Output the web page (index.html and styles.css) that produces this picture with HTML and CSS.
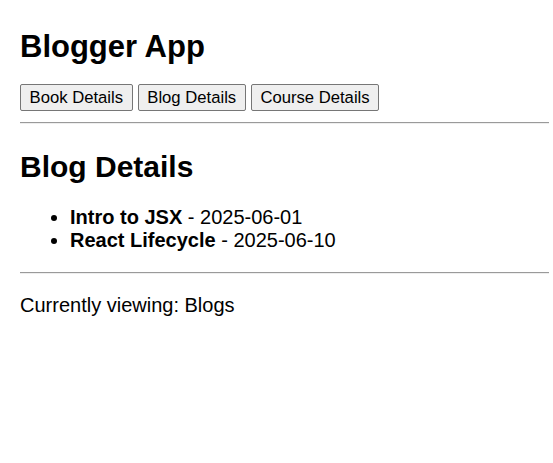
FILE: index.html
```html
<!DOCTYPE html>
<html>
<head>
<meta charset="utf-8">
<link rel="stylesheet" href="styles.css">
</head>
<body>
<div class="app">
  <h1 class="title">Blogger App</h1>
  <div class="nav">
    <button class="btn">Book Details</button>
    <button class="btn">Blog Details</button>
    <button class="btn">Course Details</button>
  </div>
  <hr class="rule rule-top">
  <h2 class="section-title">Blog Details</h2>
  <ul class="list">
    <li><strong>Intro to JSX</strong> - 2025-06-01</li>
    <li><strong>React Lifecycle</strong> - 2025-06-10</li>
  </ul>
  <hr class="rule rule-bottom">
  <p class="status">Currently viewing: Blogs</p>
</div>
</body>
</html>
```
FILE: styles.css
```css
html, body {
  margin: 0;
  padding: 0;
  background: #fff;
}
body {
  font-family: "Liberation Sans", Arial, sans-serif;
  color: #000;
  font-size: 20px;
}
.app {
  padding: 0 4px 0 20px;
}
.title {
  font-size: 31px;
  font-weight: bold;
  margin: 0;
  padding-top: 28.5px;
  line-height: normal;
}
.nav {
  display: flex;
  gap: 5px;
  margin-top: 19.5px;
}
.btn {
  font-family: "Liberation Sans", Arial, sans-serif;
  font-size: 16.67px;
  padding: 2.5px 8.6px;
  border: 1px solid #767676;
  border-radius: 2px;
  background: #efefef;
  color: #000;
  line-height: normal;
  margin: 0;
}
.rule {
  border: 0;
  border-top: 1px solid #9a9a9a;
  border-bottom: 1px solid #eeeeee;
  height: 0;
  margin: 0;
}
.rule-top {
  margin-top: 11px;
}
.section-title {
  font-size: 30px;
  font-weight: bold;
  margin: 25.5px 0 0;
}
.list {
  margin: 22px 0 0;
  padding-left: 50px;
}
.list li {
  line-height: 23px;
}
.rule-bottom {
  margin-top: 20.5px;
}
.status {
  margin: 19.5px 0 0;
}
```
